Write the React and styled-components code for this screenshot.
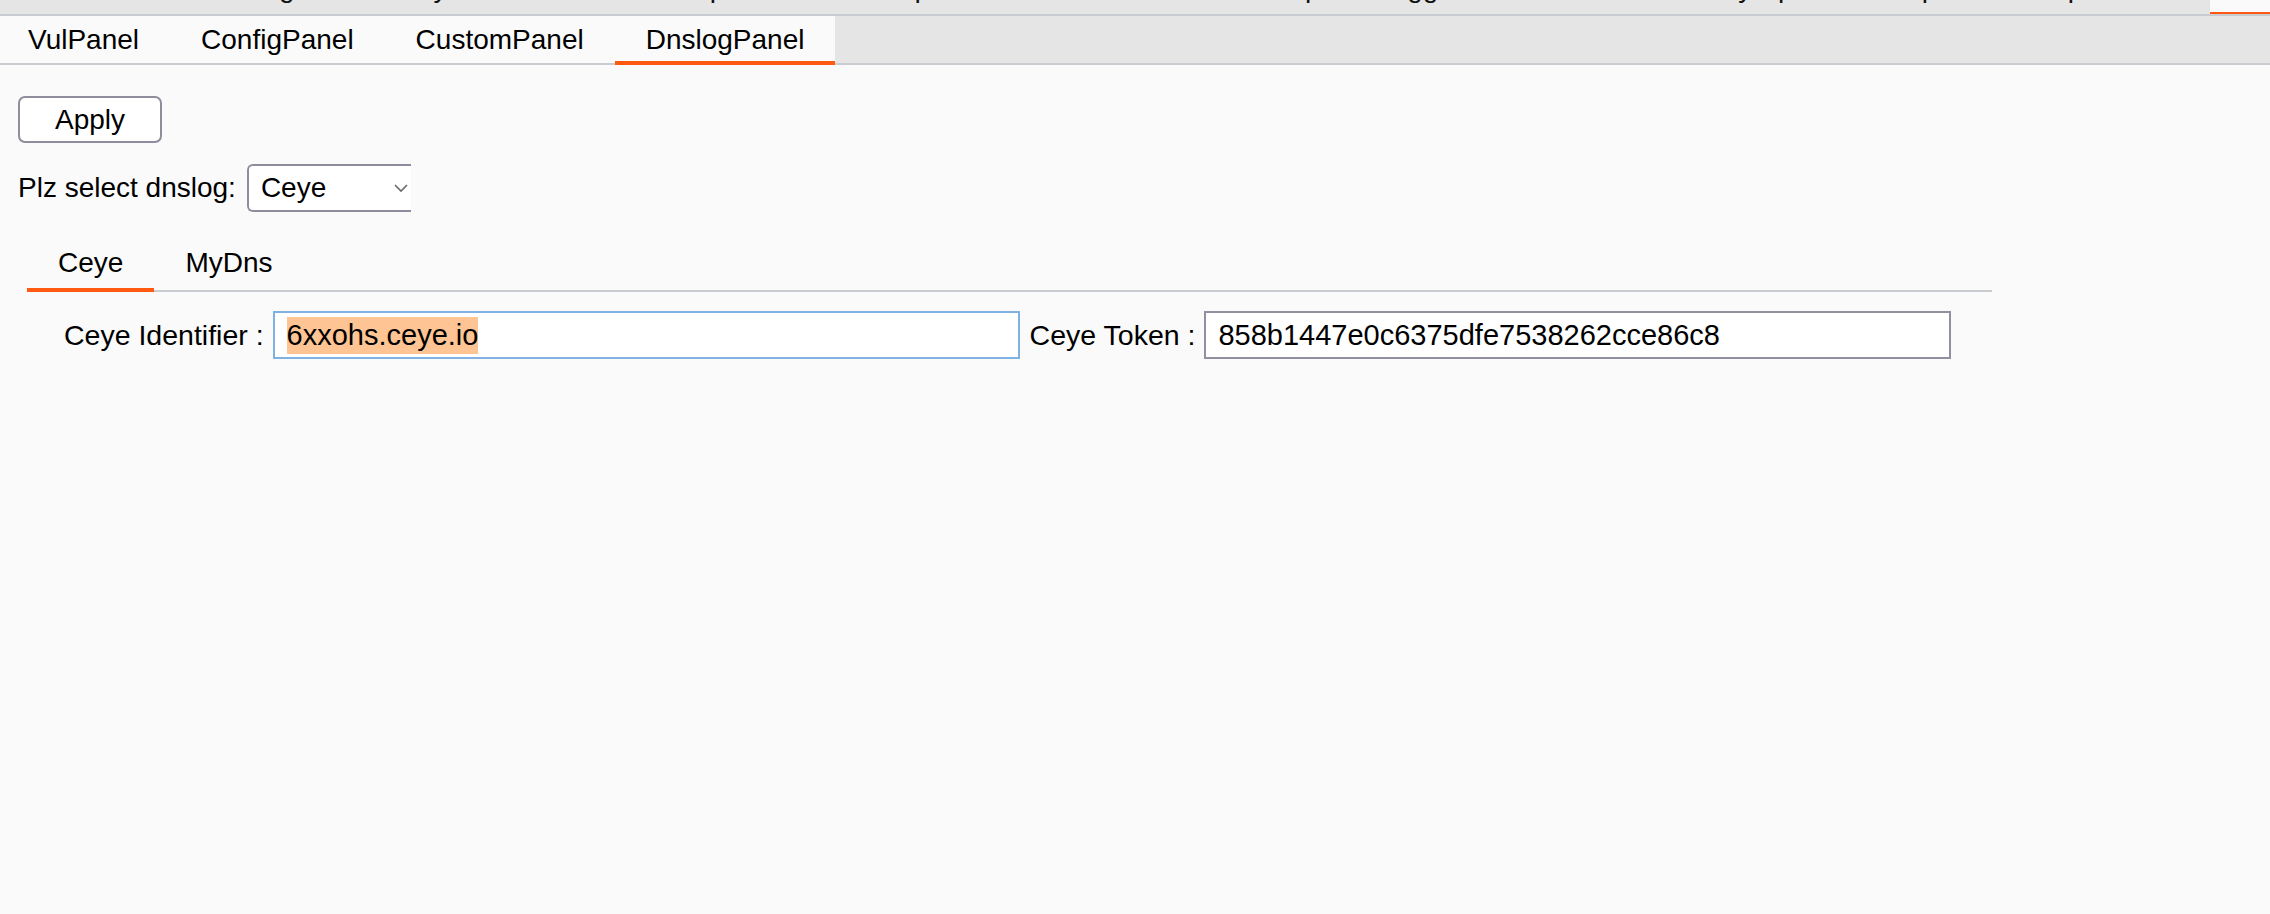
import React from "react";
import styled, { createGlobalStyle } from "styled-components";

const GlobalStyle = createGlobalStyle`
  html, body {
    margin: 0;
    padding: 0;
    background: #fafafa;
  }
  body {
    font-family: "Liberation Sans", Arial, sans-serif;
    color: #000;
  }
`;

const Page = styled.div`
  width: 2270px;
  height: 914px;
  background: #fafafa;
  overflow: hidden;
`;

/* parent tab strip, only the descenders of its labels are visible */
const TopStrip = styled.div`
  display: flex;
  height: 14px;
  background: #e5e5e5;
  border-bottom: 2px solid #c9ccd1;
  overflow: hidden;
`;

const TopTab = styled.div`
  flex: none;
  width: ${(p) => p.$w}px;
  font-size: 28px;
  line-height: 28px;
  margin-top: -26px;
  white-space: nowrap;
  color: #111;
`;

const TopActive = styled.div`
  position: relative;
  flex: none;
  margin-left: auto;
  width: 60px;
  height: 14px;
  background: #fafafa;
  &::after {
    content: "";
    position: absolute;
    left: 0;
    right: 0;
    bottom: -2px;
    height: 4px;
    background: #ff5912;
  }
`;

const TabBar = styled.div`
  display: flex;
  height: 47px;
  background: #e5e5e5;
  border-bottom: 2px solid #c9ccd1;
`;

const Tab = styled.div`
  position: relative;
  display: flex;
  align-items: center;
  padding: 0 31px 0 ${(p) => (p.$first ? 28 : 31)}px;
  background: #fafafa;
  font-size: 28px;
  color: #000;
  &::after {
    content: "";
    display: ${(p) => (p.$active ? "block" : "none")};
    position: absolute;
    left: 0;
    right: 0;
    bottom: -2px;
    height: 4px;
    background: #ff5912;
  }
`;

const Content = styled.div`
  padding: 31px 0 0 18px;
`;

const Button = styled.button`
  display: block;
  width: 144px;
  height: 47px;
  padding: 0;
  border: 2px solid #8f8c9e;
  border-radius: 7px;
  background: #fff;
  font-family: "Liberation Sans", Arial, sans-serif;
  font-size: 28px;
  color: #000;
`;

const SelectRow = styled.div`
  display: flex;
  align-items: center;
  gap: 11px;
  margin-top: 21px;
  font-size: 28px;
`;

const SelectBox = styled.div`
  display: flex;
  align-items: center;
  justify-content: space-between;
  width: 148px;
  height: 44px;
  padding: 0 2px 0 12px;
  border: 2px solid #8f8c9e;
  border-right: none;
  border-radius: 6px 0 0 6px;
  background: #fff;
  font-size: 28px;
`;

const InnerTabs = styled.div`
  display: flex;
  width: 1965px;
  height: 54px;
  margin: 24px 0 0 9px;
  border-bottom: 2px solid #c9ccd1;
`;

const InnerTab = styled.div`
  position: relative;
  display: flex;
  align-items: center;
  padding: 0 31px;
  font-size: 28px;
  &::after {
    content: "";
    display: ${(p) => (p.$active ? "block" : "none")};
    position: absolute;
    left: 0;
    right: 0;
    bottom: -2px;
    height: 4px;
    background: #ff5912;
  }
`;

const FieldRow = styled.div`
  display: flex;
  align-items: center;
  margin: 19px 0 0 46px;
  font-size: 28.5px;
`;

const Label = styled.span`
  margin-right: 9px;
  white-space: nowrap;
`;

const Field = styled.div`
  display: flex;
  align-items: center;
  box-sizing: border-box;
  width: 747px;
  height: 48px;
  padding-left: 12px;
  margin-right: 10px;
  border: 2px solid ${(p) => (p.$focus ? "#7fb1e3" : "#938fa0")};
  background: #fff;
  font-size: 29px;
  white-space: nowrap;
`;

const Selected = styled.span`
  background: #ffc493;
  padding: 2px 0;
`;

const topTabs = [
  ["Dashboard", 40],
  ["Target", 240],
  ["Proxy", 376],
  ["Intruder", 470],
  ["Repeater", 674],
  ["Sequencer", 871],
  ["Decoder", 1070],
  ["Comparer", 1246],
  ["Logger", 1376],
  ["Extensions", 1500],
  ["Key", 1704],
  ["passive", 1778],
  ["Options", 1900],
  ["Captcha", 2032],
];

function Chevron() {
  return (
    <svg width="16" height="10" viewBox="0 0 16 10">
      <path d="M2 2 L8 8 L14 2" fill="none" stroke="#6b6b6b" strokeWidth="1.6" />
    </svg>
  );
}

export default function App() {
  return (
    <Page>
      <GlobalStyle />
      <TopStrip>
        <TopTab $w={topTabs[0][1]} />
        {topTabs.map(([label, x], i) => {
          const next = i + 1 < topTabs.length ? topTabs[i + 1][1] : x + 120;
          return (
            <TopTab key={i} $w={next - x}>
              {label}
            </TopTab>
          );
        })}
        <TopActive />
      </TopStrip>
      <TabBar>
        <Tab $first>VulPanel</Tab>
        <Tab>ConfigPanel</Tab>
        <Tab>CustomPanel</Tab>
        <Tab $active>DnslogPanel</Tab>
      </TabBar>
      <Content>
        <Button>Apply</Button>
        <SelectRow>
          <span>Plz select dnslog:</span>
          <SelectBox>
            <span>Ceye</span>
            <Chevron />
          </SelectBox>
        </SelectRow>
        <InnerTabs>
          <InnerTab $active>Ceye</InnerTab>
          <InnerTab>MyDns</InnerTab>
        </InnerTabs>
        <FieldRow>
          <Label>Ceye Identifier :</Label>
          <Field $focus>
            <Selected>6xxohs.ceye.io</Selected>
          </Field>
          <Label>Ceye Token :</Label>
          <Field>858b1447e0c6375dfe7538262cce86c8</Field>
        </FieldRow>
      </Content>
    </Page>
  );
}
